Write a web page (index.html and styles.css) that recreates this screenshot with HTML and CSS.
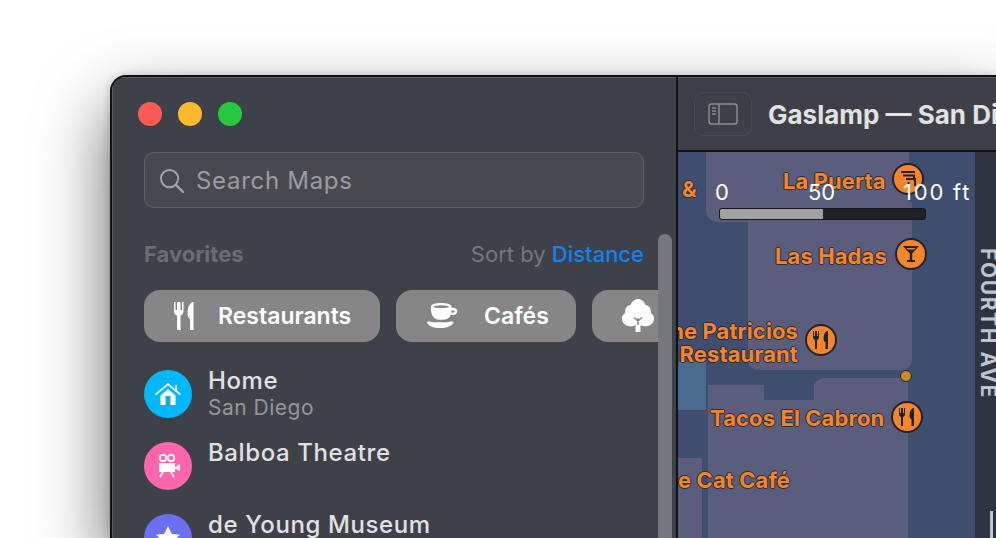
FILE: index.html
```html
<!DOCTYPE html>
<html>
<head>
  <link rel="stylesheet" href="styles.css">
</head>
<body>
  <div class="window">
    <!-- Sidebar -->
    <div class="sidebar">
      <div class="traffic-lights">
        <span class="light light-red"></span>
        <span class="light light-yellow"></span>
        <span class="light light-green"></span>
      </div>

      <div class="search-box">
        <svg class="search-icon" viewBox="0 0 26 26" width="25" height="25">
          <circle cx="11" cy="11" r="9" fill="none" stroke="#a4a5a9" stroke-width="2"/>
          <path d="M17.5 17.5L25 25" stroke="#a4a5a9" stroke-width="2.4" stroke-linecap="round"/>
        </svg>
        <span class="search-text">Search Maps</span>
      </div>

      <div class="section-head">
        <span class="section-title">Favorites</span>
        <span class="sort-label">Sort by <span class="sort-value">Distance</span></span>
      </div>

      <div class="chip-row">
        <div class="chip chip-restaurants">
          <svg viewBox="0 0 20 30" width="20" height="30">
            <path d="M0 1v9c0 2.500 1.300 4 3 4.600V29h3.500V14.600c1.700-.6 3-2.100 3-4.600V1H8v8H6.500V1H3v8H1.500V1z" fill="#fff"/>
            <path d="M18.500 1c-3 1.500-5 6-5 11 0 3 1 5 2.500 6V29h3.500V1z" fill="#fff"/>
          </svg>
          <span>Restaurants</span>
        </div>
        <div class="chip chip-cafes">
          <svg viewBox="0 0 34 28" width="32" height="26">
            <path d="M4 3.500C4 1.800 9 0 15 0s11 1.800 11 3.500V5h1.500c3 0 5 1.500 5 4s-2 4-5 4h-2.200c-1.300 3-3.800 5-6.800 5h-6c-4.500 0-8-4-8.500-10.500zm22 4.500v2.500h1.500c1.300 0 2-.6 2-1.300S28.800 8 27.500 8z" fill="#fff"/>
            <ellipse cx="15" cy="4" rx="8.500" ry="1.500" fill="#868686"/>
            <path d="M1 20c2 0 5 .8 6.500 .8h13c1.500 0 4.500-.8 6.500-.8 1 0 1.500.7 1 1.500-1.500 3-6 5.500-14 5.500S1.500 24.500 0 21.500c-.4-.8 0-1.500 1-1.500z" fill="#fff"/>
          </svg>
          <span>Cafés</span>
        </div>
        <div class="chip chip-parks">
          <svg viewBox="0 0 32 34" width="32" height="34">
            <path d="M13.500 33v-7c-1 .8-3 1.300-5 1.300C3.500 27.300 0 24 0 19.500c0-2.500 1.300-4.500 3-5.500C2.800 9.500 5 6.500 8.500 6 9.800 2.500 12.700 0 16 0c3.500 0 6.300 2.500 7.500 6 3.500 .5 5.700 3.500 5.500 8 1.700 1 3 3 3 5.500 0 4.500-3.500 7.800-8.500 7.800-2 0-4-.5-5-1.300v7z" fill="#fff"/>
            <path d="M16 26v-7M16 22l-4-3.500M16 22l4-3.500" stroke="#868686" stroke-width="1.500" fill="none"/>
          </svg>
        </div>
      </div>

      <div class="place-list">
        <div class="place">
          <div class="place-icon place-icon-home">
            <svg viewBox="0 0 28 24" width="28" height="24">
              <path d="M14 1L1 12l1 1.200L14 3.200l12 10 1-1.200-4-3.400V3h-1.800v4.100z" fill="#fff"/>
              <path d="M6.500 13.500L14 7l7.500 6.500V23h-15z" fill="#fff"/>
              <rect x="11.500" y="14" width="5" height="9" fill="#1aa7e8"/>
            </svg>
          </div>
          <div class="place-text">
            <div class="place-name">Home</div>
            <div class="place-sub">San Diego</div>
          </div>
        </div>
        <div class="place">
          <div class="place-icon place-icon-theatre">
            <svg viewBox="0 0 26 26" width="26" height="26">
              <circle cx="8" cy="5" r="3.200" fill="none" stroke="#fff" stroke-width="1.800"/>
              <circle cx="16" cy="5" r="3.200" fill="none" stroke="#fff" stroke-width="1.800"/>
              <rect x="4" y="10" width="16" height="9" fill="#fff"/>
              <path d="M20 14l5-3v7l-5-2.500z" fill="#fff"/>
              <path d="M8 19l-3 5M16 19l3 5" stroke="#fff" stroke-width="1.800"/>
            </svg>
          </div>
          <div class="place-text">
            <div class="place-name">Balboa Theatre</div>
          </div>
        </div>
        <div class="place">
          <div class="place-icon place-icon-museum">
            <svg viewBox="0 0 26 26" width="26" height="26">
              <path d="M13 1l3.700 7.700 8.300 1.100-6.100 5.800 1.600 8.400-7.500-4.100-7.500 4.100 1.600-8.400L1 9.800l8.300-1.100z" fill="#fff"/>
            </svg>
          </div>
          <div class="place-text">
            <div class="place-name">de Young Museum</div>
          </div>
        </div>
      </div>

      <div class="scrollbar"></div>
    </div>

    <!-- Main area -->
    <div class="main">
      <div class="toolbar">
        <div class="toolbar-btn">
          <svg viewBox="0 0 30 22" width="30" height="22">
            <rect x="1" y="1" width="28" height="20" rx="2.500" fill="none" stroke="#8b8c90" stroke-width="1.500"/>
            <path d="M11 1v20" stroke="#8b8c90" stroke-width="1.500"/>
            <path d="M4 5h4M4 8h4M4 11h4" stroke="#8b8c90" stroke-width="1.500"/>
          </svg>
        </div>
        <span class="toolbar-title">Gaslamp — San Diego</span>
      </div>

      <div class="map">
        <!-- map shapes -->
        <div class="shape block-top"></div>
        <div class="shape block-mid"></div>
        <div class="shape water"></div>
        <div class="shape block-low"></div>
        <div class="shape block-low-right"></div>
        <div class="shape block-corner"></div>
        <div class="shape block-left"></div>
        <div class="shape road"></div>
        <div class="shape street-tick"></div>

        <!-- labels -->
        <span class="map-label label-amp">&amp;</span>
        <span class="map-label label-puerta">La Puerta</span>
        <span class="pin pin-puerta">
          <svg viewBox="0 0 20 20" width="20" height="20"><path d="M3 3h14M5 6.500h11v3M8 10h9v7M10.500 13v4" fill="none" stroke="#20222c" stroke-width="2"/></svg>
        </span>
        <span class="map-label label-hadas">Las Hadas</span>
        <span class="pin pin-hadas">
          <svg viewBox="0 0 20 20" width="20" height="20"><path d="M2 2h16L11.200 9.500V16H14v2H6v-2h2.800V9.500z" fill="#20222c"/><path d="M5.500 4h9L13 5.500H7z" fill="#f5852b"/></svg>
        </span>
        <span class="map-label label-patricios">ne Patricios<br>Restaurant</span>
        <span class="pin pin-patricios">
          <svg viewBox="0 0 20 20" width="20" height="20"><path d="M2 1v6c0 1.500.8 2.500 2 3v9h2v-9c1.200-.5 2-1.500 2-3V1H7v5H6V1H4v5H3V1zM16 1c-2 1-3.500 4-3.500 7.500 0 2 .8 3.200 2 4V19H17V1z" fill="#20222c"/></svg>
        </span>
        <span class="dot-pin"></span>
        <span class="map-label label-tacos">Tacos El Cabron</span>
        <span class="pin pin-tacos">
          <svg viewBox="0 0 20 20" width="20" height="20"><path d="M2 1v6c0 1.500.8 2.500 2 3v9h2v-9c1.200-.5 2-1.500 2-3V1H7v5H6V1H4v5H3V1zM16 1c-2 1-3.500 4-3.500 7.500 0 2 .8 3.200 2 4V19H17V1z" fill="#20222c"/></svg>
        </span>
        <span class="map-label label-cat">e Cat Café</span>
        <span class="street-name">FOURTH AVE</span>

        <!-- scale -->
        <div class="scale">
          <div class="scale-labels">
            <span class="scale-zero">0</span>
            <span class="scale-fifty">50</span>
            <span class="scale-hundred">100 ft</span>
          </div>
          <div class="scale-bar"><div class="scale-fill"></div></div>
        </div>
      </div>
    </div>
  </div>
</body>
</html>
```

FILE: styles.css
```css
* {
  margin: 0;
  padding: 0;
  box-sizing: border-box;
}

html, body {
  width: 996px;
  height: 538px;
  overflow: hidden;
  background: #fff;
}

body {
  padding: 75px 0 0 110px;
  font-family: Inter, "Liberation Sans", sans-serif;
}

.window {
  display: flex;
  width: 886px;
  height: 463px;
  background: #3f4148;
  border: 2px solid #101114;
  border-width: 2px 0 0 2px;
  border-radius: 16px 0 0 0;
  overflow: hidden;
  box-shadow: 0 32px 70px rgba(0, 0, 0, 0.62), 0 1px 8px rgba(0, 0, 0, 0.2);
}

/* Sidebar */
.sidebar {
  position: relative;
  flex: 0 0 566px;
  padding: 25px 0 0 32px;
  background: #3f4148;
  border-right: 2px solid #101114;
  box-shadow: inset 1px 1px 0 #5c5d63;
  overflow: hidden;
}

.traffic-lights {
  display: flex;
  gap: 16px;
  margin-left: -6px;
  height: 24px;
}

.light {
  width: 24px;
  height: 24px;
  border-radius: 50%;
}

.light-red { background: #fb5b57; }
.light-yellow { background: #fcb92e; }
.light-green { background: #28c840; }

.search-box {
  display: flex;
  align-items: center;
  gap: 12px;
  width: 500px;
  height: 56px;
  margin-top: 26px;
  padding-left: 14px;
  background: #47494f;
  border: 1.500px solid #5f6166;
  border-radius: 10px;
}

.search-text {
  font-size: 24px;
  letter-spacing: 0.7px;
  color: #9b9ca0;
}

.section-head {
  display: flex;
  justify-content: space-between;
  align-items: center;
  width: 500px;
  margin-top: 32px;
  height: 28px;
}

.section-title {
  font-size: 22px;
  font-weight: 700;
  color: #6b6d72;
}

.sort-label {
  font-size: 22px;
  color: #75777c;
}

.sort-value {
  color: #0f84f5;
  font-weight: 500;
}

.chip-row {
  display: flex;
  gap: 16px;
  width: 514px;
  margin-top: 22px;
  overflow: hidden;
}

.chip {
  display: flex;
  align-items: center;
  flex-shrink: 0;
  height: 52px;
  background: #868686;
  border-radius: 16px;
  color: #fff;
  font-size: 23px;
  font-weight: 600;
}

.chip-restaurants {
  width: 236px;
  padding-left: 30px;
  gap: 24px;
}

.chip-cafes {
  width: 180px;
  padding-left: 31px;
  gap: 25px;
}

.chip-parks {
  width: 120px;
  padding-left: 30px;
}

.place-list {
  display: flex;
  flex-direction: column;
  gap: 24px;
  margin-top: 28px;
}

.place {
  display: flex;
  gap: 16px;
  height: 48px;
}

.place-icon {
  display: flex;
  align-items: center;
  justify-content: center;
  flex: 0 0 48px;
  height: 48px;
  border-radius: 50%;
}

.place-icon-home { background: #02b8fb; }
.place-icon-theatre { background: #fb66ac; }
.place-icon-museum { background: #6a70f0; }

.place-text {
  margin-top: -3px;
}

.place-name {
  font-size: 24px;
  line-height: 28px;
  font-weight: 500;
  letter-spacing: 0.6px;
  color: #e2e2e3;
}

.place-sub {
  font-size: 21px;
  line-height: 26px;
  letter-spacing: 0.5px;
  color: #96979b;
}

.scrollbar {
  position: absolute;
  top: 157px;
  right: 4px;
  width: 14px;
  height: 400px;
  background: #75777d;
  border-radius: 7px;
}

/* Main area */
.main {
  flex: 1;
  display: flex;
  flex-direction: column;
}

.toolbar {
  display: flex;
  align-items: center;
  gap: 16px;
  flex: 0 0 75px;
  padding-left: 16px;
  background: #3f4047;
  border-bottom: 2px solid #101114;
  box-shadow: inset 0 1px 0 #5c5d63;
  overflow: hidden;
}

.toolbar-btn {
  display: flex;
  align-items: center;
  justify-content: center;
  flex: 0 0 58px;
  height: 44px;
  border: 1.500px solid #4b4c53;
  border-radius: 9px;
}

.toolbar-title {
  margin-top: 2px;
  font-size: 26px;
  font-weight: 700;
  color: #e2e2e3;
  white-space: nowrap;
}

.map {
  position: relative;
  flex: 1;
  background: #3f4d6f;
  overflow: hidden;
}

.shape {
  position: absolute;
}

.block-top {
  left: 28px;
  top: 0;
  width: 203px;
  height: 70px;
  background: #5a5d7c;
  border-bottom-left-radius: 12px;
}

.block-mid {
  left: 70px;
  top: 50px;
  width: 164px;
  height: 168px;
  background: #5a5d7c;
  border-radius: 0 0 10px 10px;
}

.water {
  left: 0;
  top: 210px;
  width: 28px;
  height: 48px;
  background: #4a6a8e;
}

.block-low {
  left: 30px;
  top: 233px;
  width: 200px;
  height: 200px;
  background: #5a5d7c;
}

.block-low-right {
  left: 135px;
  top: 226px;
  width: 95px;
  height: 40px;
  background: #5a5d7c;
  border-radius: 12px 0 0 0;
}

.block-corner {
  left: 86px;
  top: 226px;
  width: 50px;
  height: 22px;
  background: #3f4d6f;
}

.block-left {
  left: 0;
  top: 306px;
  width: 24px;
  height: 100px;
  background: #5a5d7c;
}

.road {
  left: 297px;
  top: 0;
  width: 60px;
  height: 400px;
  background: #2f333f;
}

.street-tick {
  left: 312px;
  top: 359px;
  width: 3px;
  height: 40px;
  background: #bfc4d2;
}

.map-label {
  position: absolute;
  font-size: 22px;
  line-height: 23px;
  font-weight: 700;
  letter-spacing: 0.1px;
  white-space: nowrap;
  color: #f5852b;
  text-shadow: 1px 0 #2a2c38, -1px 0 #2a2c38, 0 1px #2a2c38, 0 -1px #2a2c38;
}

.label-amp { left: 4px; top: 26px; }
.label-puerta { left: 105px; top: 18px; }
.label-hadas { left: 97px; top: 93px; }
.label-patricios { left: -30px; top: 168px; text-align: right; width: 150px; }
.label-tacos { left: 32px; top: 255px; }
.label-cat { left: 0; top: 317px; }

.pin {
  position: absolute;
  display: flex;
  align-items: center;
  justify-content: center;
  width: 32px;
  height: 32px;
  background: #f5852b;
  border: 2px solid #20222c;
  border-radius: 50%;
}

.pin-puerta { left: 214px; top: 11px; }
.pin-hadas { left: 217px; top: 86px; }
.pin-patricios { left: 127px; top: 172px; }
.pin-tacos { left: 213px; top: 249px; }

.dot-pin {
  position: absolute;
  left: 222px;
  top: 218px;
  width: 12px;
  height: 12px;
  background: #c98a1e;
  border: 1.500px solid #22242e;
  border-radius: 50%;
}

.street-name {
  position: absolute;
  left: 298px;
  top: 96px;
  font-size: 21px;
  font-weight: 700;
  letter-spacing: 1.600px;
  color: #bfc4d2;
  white-space: nowrap;
  writing-mode: vertical-rl;
}

.scale {
  position: absolute;
  left: 40px;
  top: 27px;
  width: 210px;
}

.scale-labels {
  position: relative;
  height: 27px;
  color: #fff;
  font-size: 22px;
}

.scale-labels span {
  position: absolute;
  top: 0;
  white-space: nowrap;
}

.scale-zero { left: -3px; }
.scale-fifty { left: 90px; }
.scale-hundred { left: 185px; letter-spacing: 1.800px; }

.scale-bar {
  width: 207px;
  height: 12px;
  margin-top: 2px;
  margin-left: 1px;
  background: #202126;
  border: 1px solid #15161b;
  border-radius: 3px;
  overflow: hidden;
}

.scale-fill {
  width: 103px;
  height: 100%;
  background: #a2a2a3;
}
```
